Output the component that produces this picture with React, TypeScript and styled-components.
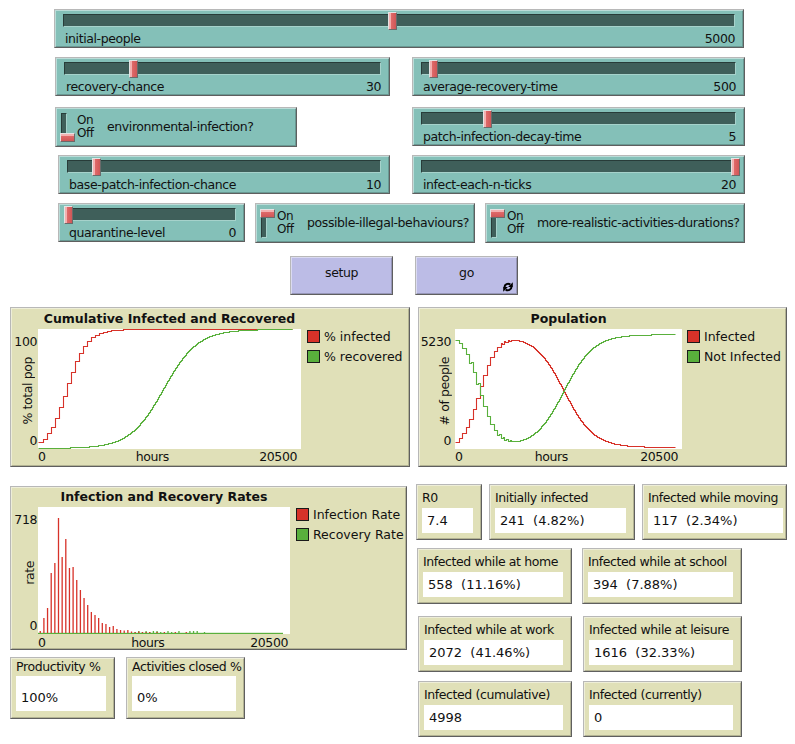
import React from "react";
import styled, { createGlobalStyle, css } from "styled-components";

const GlobalStyle = createGlobalStyle`
  html, body { margin: 0; padding: 0; background: #ffffff; }
  body { font-family: "DejaVu Sans", Verdana, sans-serif; color: #111; }
  #root { width: 795px; height: 744px; overflow: hidden; }
`;

const RED = "#d73229";
const GREEN = "#59b03c";
const TEAL = "#84c0b8";
const BEIGE = "#e0e0b8";
const LAVENDER = "#bcbce6";
const SLATE = "#3f5f5a";

const raised = css`
  box-sizing: border-box;
  border: 1px solid;
  border-color: #b8b8b8 #5f5f5f #5f5f5f #b8b8b8;
  box-shadow: inset 1px 1px 0 rgba(255, 255, 255, 0.45),
    inset -1px -1px 0 rgba(0, 0, 0, 0.2);
`;

const labelFont = css`
  font-family: "DejaVu Sans", Verdana, sans-serif;
  font-size: 12.5px;
  letter-spacing: -0.4px;
  color: #111;
  white-space: nowrap;
`;

const Page = styled.div`
  width: 795px;
  height: 744px;
  display: flex;
  flex-direction: column;
`;

const Row = styled.div<{ $top: number; $left: number; $gap?: number }>`
  display: flex;
  align-items: flex-start;
  margin-top: ${(p) => p.$top}px;
  padding-left: ${(p) => p.$left}px;
  gap: ${(p) => p.$gap ?? 0}px;
`;

const Column = styled.div<{ $top?: number; $w?: number }>`
  display: flex;
  flex-direction: column;
  padding-top: ${(p) => p.$top ?? 0}px;
  ${(p) => (p.$w ? `width: ${p.$w}px;` : "")}
`;

/* ---------- Slider ---------- */
const SliderBox = styled.div<{ $w: number }>`
  ${raised}
  width: ${(p) => p.$w}px;
  height: 39px;
  background: ${TEAL};
  padding: 4px 8px 0 8px;
  display: flex;
  flex-direction: column;
`;

const Track = styled.div`
  position: relative;
  height: 13px;
  box-sizing: border-box;
  background: ${SLATE};
  border: 1px solid;
  border-color: #283c39 #a6d2cb #a6d2cb #283c39;
`;

const Thumb = styled.div`
  position: absolute;
  top: -3px;
  width: 9px;
  height: 18px;
  margin-left: -4.5px;
  box-sizing: border-box;
  border: 1px solid;
  border-color: #e4e4e4 #6a6a6a #6a6a6a #e4e4e4;
  background: linear-gradient(to right, #f3b1b1 0, #f3b1b1 2px, #e06a6a 2px, #cf5757 100%);
`;

const SliderText = styled.div`
  ${labelFont}
  display: flex;
  justify-content: space-between;
  line-height: 14px;
  margin-top: 5px;
  padding: 0 0 0 2px;
`;

function Slider(props: { w: number; label: string; value: string; pos: number }) {
  return (
    <SliderBox $w={props.w}>
      <Track>
        <Thumb style={{ left: `${props.pos * 100}%` }} />
      </Track>
      <SliderText>
        <span>{props.label}</span>
        <span>{props.value}</span>
      </SliderText>
    </SliderBox>
  );
}

/* ---------- Switch ---------- */
const SwitchBox = styled.div<{ $w: number }>`
  ${raised}
  width: ${(p) => p.$w}px;
  height: 40px;
  background: ${TEAL};
  display: flex;
  align-items: flex-start;
  padding: 5px 0 0 4px;
`;

const Toggle = styled.div`
  position: relative;
  flex: none;
  width: 15px;
  height: 29px;
`;

const Slot = styled.div`
  position: absolute;
  left: 1px;
  top: 0;
  width: 6px;
  height: 29px;
  box-sizing: border-box;
  background: ${SLATE};
  border: 1px solid;
  border-color: #283c39 #a6d2cb #a6d2cb #283c39;
`;

const Knob = styled.div<{ $on: boolean }>`
  position: absolute;
  left: 0;
  ${(p) => (p.$on ? "top: 0;" : "bottom: 0;")}
  width: 15px;
  height: 9px;
  box-sizing: border-box;
  border: 1px solid;
  border-color: #e4e4e4 #6a6a6a #6a6a6a #e4e4e4;
  background: linear-gradient(to bottom, #f3b1b1 0, #f3b1b1 2px, #e06a6a 2px, #cf5757 100%);
`;

const OnOff = styled.div`
  display: flex;
  flex-direction: column;
  margin: 1px 0 0 2px;
  font-family: "DejaVu Sans", Verdana, sans-serif;
  font-size: 12px;
  letter-spacing: -0.5px;
  line-height: 13px;
  width: 17px;
  color: #111;
`;

const SwitchLabel = styled.span`
  ${labelFont}
  line-height: 14px;
  margin: 7px 0 0 13px;
`;

function Switch(props: { w: number; label: string; on: boolean }) {
  return (
    <SwitchBox $w={props.w}>
      <Toggle>
        <Slot />
        <Knob $on={props.on} />
      </Toggle>
      <OnOff>
        <span>On</span>
        <span>Off</span>
      </OnOff>
      <SwitchLabel>{props.label}</SwitchLabel>
    </SwitchBox>
  );
}

/* ---------- Button ---------- */
const ButtonBox = styled.div<{ $w: number }>`
  ${raised}
  ${labelFont}
  position: relative;
  width: ${(p) => p.$w}px;
  height: 39px;
  background: ${LAVENDER};
  display: flex;
  align-items: center;
  justify-content: center;
  padding-bottom: 6px;
`;

const ForeverMark = styled.svg`
  position: absolute;
  right: 4px;
  bottom: 2px;
`;

function ForeverIcon() {
  return (
    <ForeverMark width="10" height="10" viewBox="0 0 10 10">
      <path d="M1.5 5.3 A3.5 3.5 0 0 1 7.3 2.6" fill="none" stroke="#000" strokeWidth="2" />
      <path d="M9.8 0.3 V5 H5.1 Z" fill="#000" />
      <path d="M8.5 4.7 A3.5 3.5 0 0 1 2.7 7.4" fill="none" stroke="#000" strokeWidth="2" />
      <path d="M0.2 9.7 V5 H4.9 Z" fill="#000" />
    </ForeverMark>
  );
}

/* ---------- Plot ---------- */
const PlotBox = styled.div<{
  $w: number;
  $h: number;
  $left: number;
  $areaW: number;
  $areaH: number;
  $title: number;
}>`
  ${raised}
  width: ${(p) => p.$w}px;
  height: ${(p) => p.$h}px;
  background: ${BEIGE};
  display: grid;
  grid-template-columns: ${(p) => p.$left}px ${(p) => p.$areaW}px 1fr;
  grid-template-rows: ${(p) => p.$title}px ${(p) => p.$areaH}px auto;
`;

const PlotTitle = styled.div`
  grid-column: 2;
  grid-row: 1;
  align-self: center;
  text-align: center;
  font-family: "DejaVu Sans", Verdana, sans-serif;
  font-weight: bold;
  font-size: 12.5px;
  line-height: 16px;
  white-space: nowrap;
  color: #111;
`;

const YAxis = styled.div<{ $pad: number }>`
  grid-column: 1;
  grid-row: 2;
  display: flex;
  flex-direction: column;
  align-items: flex-end;
  justify-content: space-between;
  padding-right: ${(p) => p.$pad}px;
`;

const YLabel = styled.span<{ $top?: boolean }>`
  ${labelFont}
  line-height: 14px;
  ${(p) => (p.$top ? "margin-top: 5.5px;" : "margin-bottom: 1px;")}
`;

const YTitle = styled.span<{ $mr: number }>`
  ${labelFont}
  line-height: 12px;
  writing-mode: vertical-rl;
  transform: rotate(180deg);
  margin-right: ${(p) => p.$mr}px;
`;

const PlotArea = styled.svg`
  grid-column: 2;
  grid-row: 2;
  display: block;
  background: #ffffff;
`;

const XAxis = styled.div<{ $pad: number; $top: number }>`
  grid-column: 2;
  grid-row: 3;
  ${labelFont}
  display: flex;
  line-height: 14px;
  margin-top: ${(p) => p.$top}px;
  padding-right: ${(p) => p.$pad}px;
`;

const XMid = styled.span`
  flex: 1;
  text-align: center;
`;

const Legend = styled.div<{ $pad: number }>`
  grid-column: 3;
  grid-row: 2;
  display: flex;
  flex-direction: column;
  margin-top: -3px;
  padding-left: ${(p) => p.$pad}px;
`;

const LegendItem = styled.div`
  display: flex;
  align-items: center;
  gap: 4px;
  height: 20px;
  font-family: "DejaVu Sans", Verdana, sans-serif;
  font-size: 12.5px;
  white-space: nowrap;
  color: #111;
`;

const Swatch = styled.span<{ $c: string }>`
  width: 13px;
  height: 13px;
  box-sizing: border-box;
  border: 1px solid #1a1a1a;
  background: ${(p) => p.$c};
  flex: none;
`;

type PlotProps = {
  w: number;
  h: number;
  left: number;
  areaW: number;
  areaH: number;
  title: number;
  name: string;
  ymax: string;
  ytitle: string;
  yPad: number;
  yTitleMr: number;
  xPad: number;
  xTop: number;
  legendPad: number;
  legend: [string, string][];
  children: React.ReactNode;
};

function Plot(p: PlotProps) {
  return (
    <PlotBox $w={p.w} $h={p.h} $left={p.left} $areaW={p.areaW} $areaH={p.areaH} $title={p.title}>
      <PlotTitle>{p.name}</PlotTitle>
      <YAxis $pad={p.yPad}>
        <YLabel $top>{p.ymax}</YLabel>
        <YTitle $mr={p.yTitleMr}>{p.ytitle}</YTitle>
        <YLabel>0</YLabel>
      </YAxis>
      <PlotArea width={p.areaW} height={p.areaH} viewBox={`0 0 ${p.areaW} ${p.areaH}`}>
        {p.children}
      </PlotArea>
      <Legend $pad={p.legendPad}>
        {p.legend.map(([label, c]) => (
          <LegendItem key={label}>
            <Swatch $c={c} />
            <span>{label}</span>
          </LegendItem>
        ))}
      </Legend>
      <XAxis $pad={p.xPad} $top={p.xTop}>
        <span>0</span>
        <XMid>hours</XMid>
        <span>20500</span>
      </XAxis>
    </PlotBox>
  );
}

/* ---------- curve data ---------- */
const logistic = (f: number, m: number, s: number) => 1 / (1 + Math.exp(-(f - m) / s));
const C0 = 0.0482;
const L0 = logistic(0, 0.1024, 0.039);
const cum = (f: number) => C0 + ((1 - C0) * (logistic(f, 0.1024, 0.039) - L0)) / (1 - L0);
const STEP = 0.0158;
const cumQ = (f: number) => cum(Math.floor(f / STEP) * STEP);
const rec = (f: number) => logistic(f, 0.492, 0.067);

function stepPath(n: number, yOf: (f: number) => number) {
  let d = "";
  for (let i = 0; i <= n; i++) {
    const y = Math.round(yOf(i / n)) + 0.5;
    if (i === 0) d += `M0.5 ${y}`;
    else d += ` H${i + 0.5} V${y}`;
  }
  return d;
}

const cumRed = stepPath(254, (f) => 119 - cumQ(f) * 119);
const cumGreen = stepPath(254, (f) => 119 - rec(f) * 119);
const infectedNow = (f: number) => Math.max(0, 5000 * (cumQ(f) - rec(f)));
const popRed = stepPath(220, (f) => 118 - (infectedNow(f) / 5230) * 118);
const popGreen = stepPath(220, (f) => 118 - ((5000 - infectedNow(f)) / 5230) * 118);

const RATE_RED = [
  2, 15, 25, 60, 70, 115, 76, 94, 65, 66, 53, 43, 35, 28, 21, 18, 15, 10, 9, 6, 7, 4, 3, 2.5, 3,
  1.5, 1, 1.5, 1, 1, 1, 0, 1, 0, 1, 0, 0, 1, 0, 0, 1,
];
const RATE_GREEN: [number, number][] = [
  [26, 1], [27, 2], [28, 1], [29, 2], [30, 1], [31, 2], [32, 2], [33, 1], [35, 2], [36, 1],
  [38, 2], [41, 2], [42, 2], [43, 2], [45, 1],
];
const barX = (i: number) => 1.6 + i * 3.65;

/* ---------- Monitor ---------- */
const MonitorBox = styled.div<{ $w: number; $h: number; $pt: number; $pr: number }>`
  ${raised}
  width: ${(p) => p.$w}px;
  height: ${(p) => p.$h}px;
  background: ${BEIGE};
  padding: ${(p) => p.$pt}px ${(p) => p.$pr}px 0 5px;
  display: flex;
  flex-direction: column;
`;

const MonitorLabel = styled.div`
  ${labelFont}
  line-height: 16px;
`;

const MonitorValue = styled.div<{ $h: number; $mt: number; $pt: number }>`
  margin-top: ${(p) => p.$mt}px;
  height: ${(p) => p.$h}px;
  box-sizing: border-box;
  background: #ffffff;
  padding: ${(p) => p.$pt}px 0 0 5px;
  font-family: "DejaVu Sans", Verdana, sans-serif;
  font-size: 13px;
  line-height: ${(p) => p.$h - p.$pt}px;
  white-space: pre;
  color: #111;
`;

function Monitor(props: { w: number; label: string; value: string; pr?: number; tall?: boolean }) {
  const tall = !!props.tall;
  return (
    <MonitorBox $w={props.w} $h={tall ? 62 : 56} $pt={tall ? 1 : 5} $pr={props.pr ?? 8}>
      <MonitorLabel>{props.label}</MonitorLabel>
      <MonitorValue $h={tall ? 35 : 25} $mt={tall ? 1 : 2} $pt={tall ? 9 : 0}>
        {props.value}
      </MonitorValue>
    </MonitorBox>
  );
}

export default function App() {
  return (
    <>
      <GlobalStyle />
      <Page>
        <Row $top={9} $left={54}>
          <Slider w={690} label="initial-people" value="5000" pos={0.49} />
        </Row>
        <Row $top={9} $left={55} $gap={22}>
          <Slider w={335} label="recovery-chance" value="30" pos={0.219} />
          <Slider w={333} label="average-recovery-time" value="500" pos={0.037} />
        </Row>
        <Row $top={11} $left={55} $gap={115}>
          <Switch w={242} label="environmental-infection?" on={false} />
          <Slider w={333} label="patch-infection-decay-time" value="5" pos={0.208} />
        </Row>
        <Row $top={8} $left={58} $gap={22}>
          <Slider w={332} label="base-patch-infection-chance" value="10" pos={0.091} />
          <Slider w={333} label="infect-each-n-ticks" value="20" pos={1} />
        </Row>
        <Row $top={9} $left={58} $gap={10}>
          <Slider w={187} label="quarantine-level" value="0" pos={0} />
          <Switch w={220} label="possible-illegal-behaviours?" on />
          <Switch w={260} label="more-realistic-activities-durations?" on />
        </Row>
        <Row $top={13} $left={290} $gap={22}>
          <ButtonBox $w={103}>setup</ButtonBox>
          <ButtonBox $w={103}>
            go
            <ForeverIcon />
          </ButtonBox>
        </Row>
        <Row $top={12} $left={10} $gap={8}>
          <Plot
            w={400}
            h={160}
            left={27}
            areaW={263}
            areaH={120}
            title={21}
            name="Cumulative Infected and Recovered"
            ymax="100"
            ytitle="% total pop"
            yPad={1}
            yTitleMr={3}
            xPad={4}
            xTop={1}
            legendPad={6}
            legend={[
              ["% infected", RED],
              ["% recovered", GREEN],
            ]}
          >
            <path d={cumRed} fill="none" stroke={RED} strokeWidth={1.1} />
            <path d={cumGreen} fill="none" stroke={GREEN} strokeWidth={1.1} />
          </Plot>
          <Plot
            w={369}
            h={160}
            left={36}
            areaW={227}
            areaH={120}
            title={21}
            name="Population"
            ymax="5230"
            ytitle="# of people"
            yPad={4}
            yTitleMr={0}
            xPad={4}
            xTop={1}
            legendPad={5}
            legend={[
              ["Infected", RED],
              ["Not Infected", GREEN],
            ]}
          >
            <path d={popRed} fill="none" stroke={RED} strokeWidth={1.1} />
            <path d={popGreen} fill="none" stroke={GREEN} strokeWidth={1.1} />
          </Plot>
        </Row>
        <Row $top={17} $left={10} $gap={9}>
          <Column $top={2} $w={397}>
            <Plot
              w={397}
              h={164}
              left={27}
              areaW={252}
              areaH={127}
              title={20}
              name="Infection and Recovery Rates"
              ymax="718"
              ytitle="rate"
              yPad={1}
              yTitleMr={1}
              xPad={2}
              xTop={2}
              legendPad={6}
              legend={[
                ["Infection Rate", RED],
                ["Recovery Rate", GREEN],
              ]}
            >
              <rect x={0} y={125.8} width={245} height={1.2} fill={GREEN} />
              {RATE_GREEN.map(([i, h]) => (
                <rect key={`g${i}`} x={barX(i)} y={126 - h} width={1.3} height={h} fill={GREEN} />
              ))}
              {RATE_RED.map((h, i) =>
                h > 0 ? (
                  <rect key={`r${i}`} x={barX(i)} y={126 - h} width={1.3} height={h} fill={RED} />
                ) : null
              )}
            </Plot>
            <Row $top={7} $left={0} $gap={11}>
              <Monitor w={105} label="Productivity %" value="100%" tall />
              <Monitor w={119} label="Activities closed %" value="0%" tall />
            </Row>
          </Column>
          <Column>
            <Row $top={0} $left={0} $gap={7}>
              <Monitor w={66} label="R0" value="7.4" />
              <Monitor w={146} label="Initially infected" value="241  (4.82%)" />
              <Monitor w={145} label="Infected while moving" value="117  (2.34%)" pr={3} />
            </Row>
            <Row $top={8} $left={1} $gap={10}>
              <Monitor w={155} label="Infected while at home" value="558  (11.16%)" />
              <Monitor w={160} label="Infected while at school" value="394  (7.88%)" />
            </Row>
            <Row $top={12} $left={2} $gap={11}>
              <Monitor w={154} label="Infected while at work" value="2072  (41.46%)" />
              <Monitor w={159} label="Infected while at leisure" value="1616  (32.33%)" />
            </Row>
            <Row $top={9} $left={2} $gap={11}>
              <Monitor w={154} label="Infected (cumulative)" value="4998" />
              <Monitor w={159} label="Infected (currently)" value="0" />
            </Row>
          </Column>
        </Row>
      </Page>
    </>
  );
}
